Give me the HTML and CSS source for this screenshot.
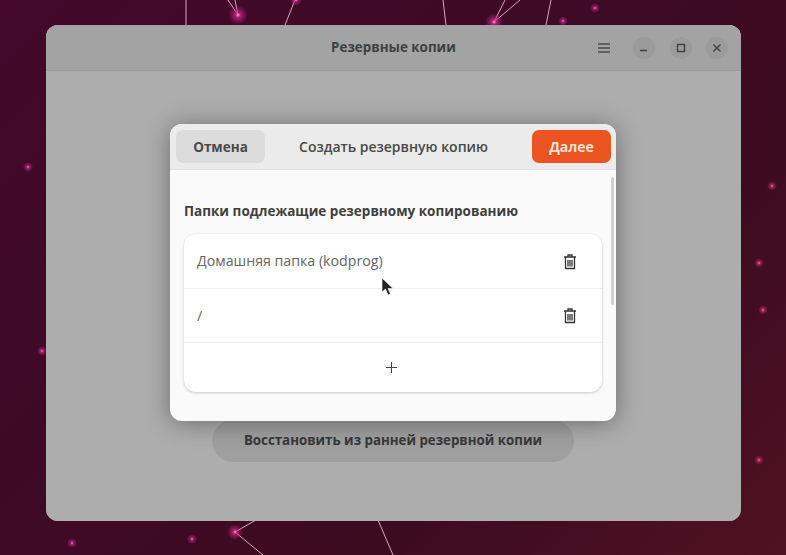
FILE: index.html
```html
<!DOCTYPE html>
<html lang="ru">
<head>
<meta charset="utf-8">
<title>Резервные копии</title>
<link rel="stylesheet" href="styles.css">
</head>
<body>
<div class="desktop">
  <svg class="wallpaper" width="786" height="555" viewBox="0 0 786 555">
    <defs>
      <radialGradient id="glow">
        <stop offset="0" stop-color="#ffa0d8"/>
        <stop offset=".25" stop-color="#d02c88" stop-opacity=".75"/>
        <stop offset="1" stop-color="#b02078" stop-opacity="0"/>
      </radialGradient>
      <radialGradient id="glow-red">
        <stop offset="0" stop-color="#f07ab0"/>
        <stop offset=".35" stop-color="#c02a60" stop-opacity=".7"/>
        <stop offset="1" stop-color="#a02050" stop-opacity="0"/>
      </radialGradient>
    </defs>
    <g class="lines">
      <path d="M186 0V25M238 15L228 0M238 15L235 0M295 0L285 25M443 0L446 25M494 22L505 0M494 22L520 0M551 0L546 25M235 532L256 520M235 532L263 555M378 520L393 555"/>
    </g>
    <circle cx="238" cy="15" r="10" fill="url(#glow)"/>
    <circle cx="494" cy="22" r="9" fill="url(#glow)"/>
    <circle cx="595" cy="8" r="5" fill="url(#glow)"/>
    <circle cx="563" cy="21" r="5" fill="url(#glow)"/>
    <circle cx="296" cy="0" r="6" fill="url(#glow)"/>
    <circle cx="28" cy="167" r="5" fill="url(#glow)"/>
    <circle cx="772" cy="186" r="5" fill="url(#glow-red)"/>
    <circle cx="759" cy="263" r="5" fill="url(#glow-red)"/>
    <circle cx="763" cy="310" r="5" fill="url(#glow-red)"/>
    <circle cx="42" cy="351" r="5" fill="url(#glow)"/>
    <circle cx="759" cy="460" r="5" fill="url(#glow-red)"/>
    <circle cx="72" cy="543" r="5" fill="url(#glow)"/>
    <circle cx="192" cy="539" r="5" fill="url(#glow)"/>
    <circle cx="235" cy="532" r="8" fill="url(#glow)"/>
  </svg>

  <section class="window">
    <header class="titlebar">
      <h1 class="window-title">Резервные копии</h1>
      <div class="controls">
        <svg class="menu-icon" width="12" height="10" viewBox="0 0 12 10"><path d="M0 1H12M0 5H12M0 9H12"/></svg>
        <span class="ctl ctl-min"><svg width="10" height="10" viewBox="0 0 10 10"><path d="M1 7.500H8"/></svg></span>
        <span class="ctl"><svg width="10" height="10" viewBox="0 0 10 10"><rect x="1.500" y="1.500" width="7" height="7"/></svg></span>
        <span class="ctl"><svg width="10" height="10" viewBox="0 0 10 10"><path d="M1.500 1.500L8.500 8.500M8.500 1.500L1.500 8.500"/></svg></span>
      </div>
    </header>
    <div class="window-body">
      <button class="restore">Восстановить из ранней резервной копии</button>
    </div>
  </section>

  <section class="dialog">
    <header class="dialog-head">
      <button class="btn-cancel">Отмена</button>
      <h2 class="dialog-title">Создать резервную копию</h2>
      <button class="btn-next">Далее</button>
    </header>
    <div class="dialog-body">
      <h3 class="group-title">Папки подлежащие резервному копированию</h3>
      <ul class="list">
        <li class="row"><span class="row-label">Домашняя папка (kodprog)</span>
          <svg class="trash" width="14" height="16" viewBox="0 0 14 16"><path d="M5 2.500V1H9V2.500M1 3H13M2.500 3.500V14.500H11.500V3.500M5 6V12.500M7 6V12.500M9 6V12.500"/></svg>
        </li>
        <li class="row"><span class="row-label">/</span>
          <svg class="trash" width="14" height="16" viewBox="0 0 14 16"><path d="M5 2.500V1H9V2.500M1 3H13M2.500 3.500V14.500H11.500V3.500M5 6V12.500M7 6V12.500M9 6V12.500"/></svg>
        </li>
        <li class="row row-add">
          <svg class="plus" width="11" height="11" viewBox="0 0 11 11"><path d="M5.500 0V11M0 5.500H11"/></svg>
        </li>
      </ul>
      <div class="scrollbar"></div>
    </div>
  </section>

  <svg class="cursor" width="13" height="20" viewBox="0 0 13 20"><path d="M1 1V15L4.500 12L7 18L9.500 17L7 11.500H12Z"/></svg>
</div>
</body>
</html>
```
FILE: styles.css
```css
* { box-sizing: border-box; }
html, body { margin: 0; padding: 0; }
body { font-family: "Open Sans", "Noto Sans", sans-serif; }
h1, h2, h3, ul { margin: 0; padding: 0; }

.desktop {
  position: relative;
  width: 786px;
  height: 555px;
  overflow: hidden;
  background: linear-gradient(135deg, #43082b 0%, #3e0a25 45%, #3d0b20 70%, #501123 100%);
}
.wallpaper { position: absolute; inset: 0; }
.lines path { fill: none; stroke: #d9a5c0; stroke-width: 1; }

.window {
  position: absolute;
  left: 46px;
  top: 25px;
  width: 695px;
  height: 496px;
  border-radius: 12px;
  background: #acacac;
  display: flex;
  flex-direction: column;
  overflow: hidden;
  box-shadow: inset 0 1px 0 #b59aa6;
}
.titlebar {
  flex: none;
  height: 46px;
  padding-bottom: 1px;
  position: relative;
  display: flex;
  align-items: center;
  justify-content: center;
  background: #a3a3a3;
  border-bottom: 1px solid #9b9b9b;
}
.window-title {
  font-size: 13.400px;
  font-weight: 700;
  color: #3f3f3f;
}
.controls {
  position: absolute;
  right: 13px;
  top: 12px;
  display: flex;
  align-items: center;
  gap: 14.500px;
}
.menu-icon { margin-right: 8.500px; }
.menu-icon path { fill: none; stroke: #4a4a4a; stroke-width: 1.300; }
.ctl {
  width: 22px;
  height: 22px;
  border-radius: 50%;
  background: #9b9b9b;
  display: flex;
  align-items: center;
  justify-content: center;
}
.ctl svg * { fill: none; stroke: #3f3f3f; stroke-width: 1.400; }
.window-body {
  flex: 1;
  display: flex;
  flex-direction: column;
  align-items: center;
  justify-content: flex-end;
  padding: 0 1px 59px 0;
  background: #adadad;
}
.restore {
  width: 362px;
  height: 42px;
  border: 0;
  border-radius: 21px;
  background: #9f9f9f;
  font: 700 13.300px "Open Sans", "Noto Sans", sans-serif;
  color: #373737;
  padding: 0 0 2px;
}

.dialog {
  position: absolute;
  left: 170px;
  top: 124px;
  width: 446px;
  height: 297px;
  border-radius: 12px;
  background: #fafafa;
  overflow: hidden;
  display: flex;
  flex-direction: column;
  box-shadow: 0 2px 24px rgba(0, 0, 0, .38);
}
.dialog-head {
  flex: none;
  height: 46px;
  display: grid;
  grid-template-columns: 1fr auto 1fr;
  align-items: center;
  padding: 0 5px 0 6px;
  background: #ebebeb;
  border-bottom: 1px solid #e1e1e1;
}
.btn-cancel, .btn-next {
  height: 33px;
  border: 0;
  border-radius: 7px;
  font: 700 13.500px "Open Sans", "Noto Sans", sans-serif;
  padding: 0;
}
.btn-cancel { width: 89px; background: #dcdcdc; color: #4a4a4a; }
.btn-next { width: 79px; justify-self: end; background: #e95420; color: #fbe3d4; font-size: 14px; }
.dialog-title { font-size: 14px; font-weight: 600; color: #484848; }
.dialog-body {
  position: relative;
  flex: 1;
  padding: 32px 14px 0;
}
.group-title {
  font-size: 13.500px;
  font-weight: 700;
  color: #3f3f3f;
  line-height: 18px;
  margin-bottom: 14px;
}
.list {
  list-style: none;
  width: 418px;
  background: #fff;
  border-radius: 12px;
  box-shadow: 0 1px 3px rgba(0, 0, 0, .2);
}
.row {
  height: 54px;
  display: flex;
  align-items: center;
  justify-content: space-between;
  padding: 0 25px 0 13px;
  font-size: 14.200px;
  color: #666;
  border-bottom: 1px solid #f1f1f1;
}
.row:first-child { height: 55px; }
.row-label { padding-bottom: 1px; }
.trash { margin-top: 1px; }
.trash path { fill: none; stroke: #333; stroke-width: 1.300; }
.row-add { height: 49px; justify-content: center; border-bottom: 0; padding: 0 4px 0 0; }
.plus path { fill: none; stroke: #444; stroke-width: 1; }
.scrollbar {
  position: absolute;
  right: 2px;
  top: 7px;
  width: 3px;
  height: 128px;
  border-radius: 2px;
  background: #d2d2d2;
}
.cursor {
  position: absolute;
  left: 381px;
  top: 277px;
}
.cursor path { fill: #222; stroke: #fff; stroke-width: .6; }
```
